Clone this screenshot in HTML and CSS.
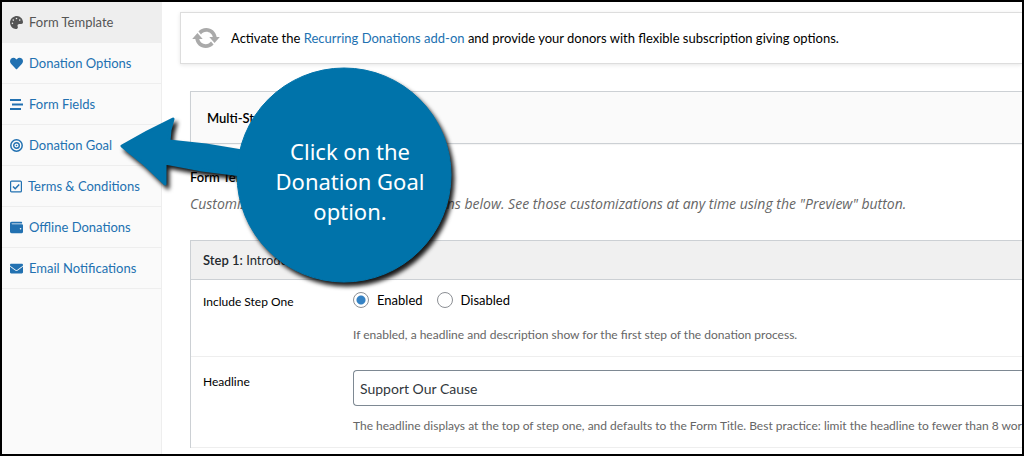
FILE: index.html
```html
<!DOCTYPE html>
<html lang="en">
<head>
    <meta charset="UTF-8">
    <meta name="viewport" content="width=device-width, initial-scale=1.0">
    <title>Donation Form Options</title>
    <link rel="stylesheet" href="styles.css">
</head>
<body>
    <div class="screen">
        <nav class="tabs">
            <a class="tab active" href="#template">
                <svg class="icon" viewBox="0 0 512 512"><path fill="currentColor" d="M204 5C105 24 25 105 6 203c-37 191 131 332 254 305 42-7 62-56 43-94-24-46 10-101 62-101h80c37 0 67-31 67-68C511 95 370-28 204 5zM96 320c-18 0-32-14-32-32s14-32 32-32 32 14 32 32-14 32-32 32zm32-128c-18 0-32-14-32-32s14-32 32-32 32 14 32 32-14 32-32 32zm128-64c-18 0-32-14-32-32s14-32 32-32 32 14 32 32-14 32-32 32zm128 64c-18 0-32-14-32-32s14-32 32-32 32 14 32 32-14 32-32 32z"/></svg>
                <span>Form Template</span>
            </a>
            <a class="tab" href="#options">
                <svg class="icon" viewBox="0 0 512 512"><path fill="currentColor" d="M462 62c-55-47-136-38-186 14l-20 20-20-20C186 24 105 15 50 62c-63 54-66 150-10 208l193 200c13 13 33 13 46 0l193-200c56-58 53-154-10-208z"/></svg>
                <span>Donation Options</span>
            </a>
            <a class="tab" href="#fields">
                <svg class="icon" viewBox="0 0 13 13"><path stroke="currentColor" stroke-width="2.200" d="M0 2h11M2 6.500h11M0 11h11"/></svg>
                <span>Form Fields</span>
            </a>
            <a class="tab" href="#goal">
                <svg class="icon" viewBox="0 0 13 13" fill="none" stroke="currentColor"><circle cx="6.500" cy="6.500" r="5.700" stroke-width="1.500"/><circle cx="6.500" cy="6.500" r="2.800" stroke-width="1.400"/><circle cx="6.500" cy="6.500" r=".8" fill="currentColor" stroke="none"/></svg>
                <span>Donation Goal</span>
            </a>
            <a class="tab" href="#terms">
                <svg class="icon icon-narrow" viewBox="0 0 12 13" fill="none" stroke="currentColor"><rect x=".6" y="1.100" width="10.800" height="10.800" rx="1" stroke-width="1.200"/><path d="M3 6.500l2.200 2.200L9.200 4.600" stroke-width="1.500"/></svg>
                <span>Terms &amp; Conditions</span>
            </a>
            <a class="tab" href="#offline">
                <svg class="icon" viewBox="0 0 512 512"><path fill="currentColor" d="M461 128H80c-9 0-16-7-16-16s7-16 16-16h384c9 0 16-7 16-16 0-27-22-48-48-48H64C29 32 0 61 0 96v320c0 35 29 64 64 64h397c28 0 51-22 51-48V176c0-26-23-48-51-48zm-45 208c-18 0-32-14-32-32s14-32 32-32 32 14 32 32-14 32-32 32z"/></svg>
                <span>Offline Donations</span>
            </a>
            <a class="tab" href="#email">
                <svg class="icon" viewBox="0 0 512 512"><path fill="currentColor" d="M502 191c4-3 10 0 10 5v204c0 27-21 48-48 48H48c-27 0-48-21-48-48V196c0-5 6-8 10-5 22 17 52 40 155 114 21 16 57 48 91 48s70-33 91-48c103-74 133-97 155-114zM256 320c23 0 57-29 74-42 133-96 143-105 174-129 5-4 8-11 8-19v-18c0-27-21-48-48-48H48c-27 0-48 21-48 48v18c0 8 3 14 8 19 31 24 41 33 174 129 17 13 51 42 74 42z"/></svg>
                <span>Email Notifications</span>
            </a>
        </nav>

        <main class="content">
            <div class="notice">
                <svg class="notice-icon" viewBox="0 0 20 20"><path fill="#aaa" d="M10.200 3.280c3.530 0 6.430 2.610 6.920 6h2.080l-3.500 4-3.500-4h2.320c-.45-1.970-2.210-3.450-4.320-3.450-1.450 0-2.730.71-3.540 1.780L4.950 5.660C6.230 4.200 8.110 3.280 10.200 3.280zm-.4 13.440c-3.520 0-6.430-2.610-6.920-6H.8l3.500-4 3.500 4H5.480c.45 1.970 2.210 3.450 4.320 3.450 1.450 0 2.730-.71 3.540-1.780l1.710 1.950c-1.280 1.460-3.150 2.380-5.250 2.380z"/></svg>
                <p>Activate the <a href="#addon">Recurring Donations add-on</a> and provide your donors with flexible subscription giving options.</p>
            </div>

            <div class="settings">
                <div class="template-box">Multi-Step Form</div>

                <h2>Form Template</h2>
                <p class="intro">Customize the form display with the options below. See those customizations at any time using the "Preview" button.</p>

                <section class="step">
                    <h3><strong>Step 1:</strong> Introduction</h3>
                    <div class="field">
                        <div class="field-label" id="step-label">Include Step One</div>
                        <div class="field-body">
                            <div class="radios" role="radiogroup" aria-labelledby="step-label">
                                <label><input type="radio" name="step" checked>Enabled</label>
                                <label><input type="radio" name="step">Disabled</label>
                            </div>
                            <p class="help">If enabled, a headline and description show for the first step of the donation process.</p>
                        </div>
                    </div>
                    <div class="field field-text">
                        <label class="field-label" for="headline">Headline</label>
                        <div class="field-body">
                            <input class="text-input" type="text" id="headline" value="Support Our Cause">
                            <p class="help">The headline displays at the top of step one, and defaults to the Form Title. Best practice: limit the headline to fewer than 8 words.</p>
                        </div>
                    </div>
                </section>
            </div>
        </main>

        <!-- Tutorial pointer -->
        <div class="callout">
            <svg class="callout-shape" viewBox="0 0 340 224"><g fill="#0073aa" stroke="#0073aa" stroke-linejoin="round"><path stroke-width="3" d="M4 82L29 68 55 55 52 66 51 77 88 81 124 87V111L84 106 47 99 47 120 25 99z"/><circle cx="226" cy="111" r="107"/></g></svg>
            <p>Click on the Donation Goal option.</p>
        </div>
    </div>
</body>
</html>
```
FILE: styles.css
```css
* {
    box-sizing: border-box;
}

body {
    margin: 0;
    font-family: Lato, "Open Sans", sans-serif;
    font-size: 13px;
    line-height: 20px;
    color: #000;
}

p, h2, h3 {
    margin: 0;
}

a {
    color: #2271b1;
    text-decoration: none;
}

.screen {
    position: relative;
    display: flex;
    height: 100vh;
    border: 2px solid #000;
    overflow: hidden;
    background-color: #fff;
}

/* Sidebar */
.tabs {
    flex: 0 0 160px;
    background-color: #fafafa;
    border-right: 1px solid #eee;
}

.tab {
    display: flex;
    align-items: center;
    gap: 6px;
    padding: 10px 8px;
    border-bottom: 1px solid #eee;
    white-space: nowrap;
}

.tab.active {
    background-color: #eee;
    color: #555;
}

.icon {
    flex: none;
    width: 13px;
    height: 13px;
}

.icon-narrow {
    width: 12px;
}

/* Main column */
.content {
    flex: 1;
    min-width: 0;
    padding: 10px 0 0 18px;
    white-space: nowrap;
}

.notice {
    display: flex;
    align-items: center;
    gap: 10px;
    height: 52px;
    padding-left: 10px;
    border: 1px solid #ddd;
    border-right: 0;
    box-shadow: 0 1px 4px rgba(0, 0, 0, 0.1);
}

.notice-icon {
    flex: none;
    width: 30px;
    height: 30px;
}

.settings {
    padding: 27px 0 0 10px;
}

.template-box {
    padding: 16px 16px 15px;
    border: 1px solid #ccd0d4;
    border-right: 0;
    background-color: #fafafa;
    font-weight: 600;
    box-shadow: 0 1px 1px rgba(0, 0, 0, 0.04);
}

h2 {
    margin-top: 23px;
    font-size: 13px;
    font-weight: 600;
}

.intro {
    margin: 7px 0 26px;
    font-family: "Open Sans", sans-serif;
    font-size: 14px;
    font-style: italic;
    color: #666;
}

.step {
    border: 1px solid #ccd0d4;
    border-width: 1px 0 0 1px;
}

h3 {
    padding: 9px 12px;
    border-bottom: 1px solid #ccd0d4;
    background-color: #f0f0f0;
    font-size: 13px;
    font-weight: 400;
    color: #23282d;
}

h3 strong {
    font-weight: 600;
}

.field {
    display: flex;
    padding: 10px 0 11px 12px;
    border-bottom: 1px solid #eee;
}

.field-label {
    flex: 0 0 150px;
    padding-top: 2px;
    font-size: 12px;
}

.field-text .field-label {
    padding-top: 5px;
}

.field-body {
    flex: 1;
    min-width: 0;
}

.radios {
    display: flex;
    gap: 14px;
}

.radios label {
    display: flex;
    align-items: center;
    gap: 8px;
}

.radios input {
    appearance: none;
    width: 16px;
    height: 16px;
    margin: 0;
    border: 1px solid #8c8f94;
    border-radius: 50%;
}

.radios input:checked {
    background: radial-gradient(circle, #3582c4 4px, #fff 5px);
}

.help {
    margin-top: 15px;
    font-size: 12px;
    color: #666;
}

.text-input {
    display: block;
    width: 100%;
    height: 36px;
    margin-top: 3px;
    padding: 0 6px;
    border: 1px solid #7e8993;
    border-right: 0;
    border-radius: 4px 0 0 4px;
    font-family: inherit;
    font-size: 14px;
    color: #32373c;
}

.text-input + .help {
    margin-top: 10px;
}

/* Tutorial pointer */
.callout {
    position: absolute;
    top: 62px;
    left: 116px;
    width: 340px;
    height: 224px;
}

.callout-shape {
    display: block;
    width: 340px;
    height: 224px;
    overflow: visible;
    filter: drop-shadow(3px 4px 2px rgba(0, 0, 0, 0.9));
}

.callout p {
    position: absolute;
    top: 72px;
    left: 142px;
    width: 180px;
    font-family: "Noto Sans", sans-serif;
    font-size: 22px;
    line-height: 30px;
    text-align: center;
    color: #fff;
}
```
